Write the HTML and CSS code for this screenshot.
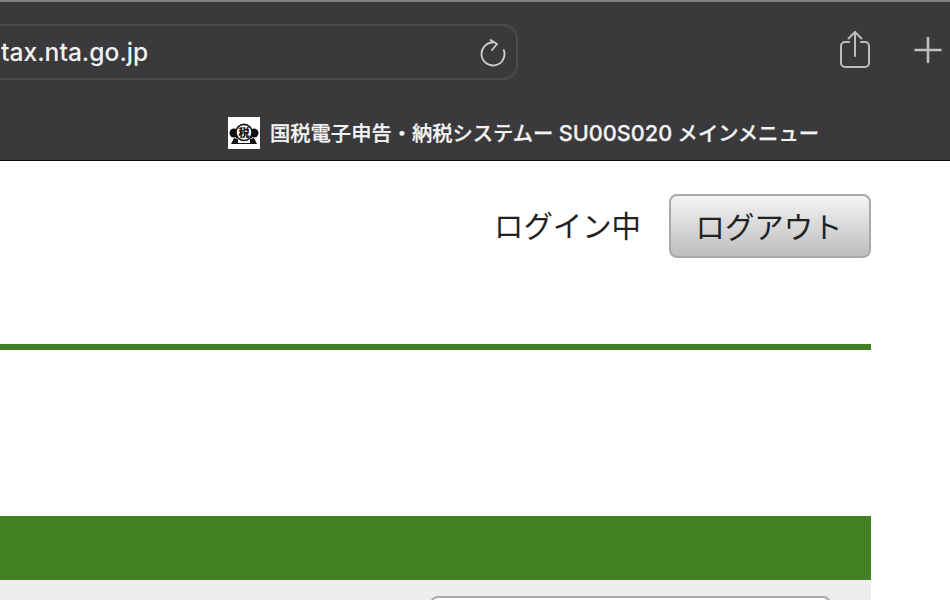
FILE: index.html
```html
<!DOCTYPE html>
<html lang="ja">
<head>
<meta charset="utf-8">
<title>国税電子申告・納税システム</title>
<link rel="stylesheet" href="styles.css">
</head>
<body>
<header class="toolbar">
  <div class="toolbar-top">
    <div class="url-bar">
      <span class="url-text">tax.nta.go.jp</span>
      <svg class="reload" width="26" height="30" viewBox="0 0 26 30" fill="none" stroke="#d0d0d1" stroke-width="1.8" stroke-linecap="round" stroke-linejoin="round">
        <path d="M12.500 3.500A11.500 11.500 0 1 0 23.800 11"/>
        <path d="M10.700 1 17 5 12 11"/>
      </svg>
    </div>
    <div class="toolbar-actions">
      <svg class="share" width="32" height="40" viewBox="0 0 32 40" fill="none" stroke="#bcbcbd" stroke-width="2" stroke-linecap="round" stroke-linejoin="round">
        <path d="M10 12H6a4 4 0 0 0-4 4v17a4 4 0 0 0 4 4h20a4 4 0 0 0 4-4V16a4 4 0 0 0-4-4h-4"/>
        <path d="M16 26V2"/>
        <path d="M9.500 8.500 16 2l6.500 6.500"/>
      </svg>
      <svg class="plus" width="28" height="28" viewBox="0 0 28 28" fill="none" stroke="#c0c0c1" stroke-width="2.600" stroke-linecap="round">
        <path d="M14 2v24M1.500 14h25"/>
      </svg>
    </div>
  </div>
  <div class="tab-title">
    <svg class="logo" width="32" height="32" viewBox="0 0 32 32">
      <rect width="32" height="32" fill="#fff"/>
      <path d="M9 10Q16 3 23 10L24 21H8Z" fill="#111"/>
      <circle cx="6" cy="16" r="4.500" fill="#111"/>
      <circle cx="26" cy="16" r="4.500" fill="#111"/>
      <path d="M3 27 6 21 10 22 10 26H22L22 22 26 21 29 27Z" fill="#111"/>
      <circle cx="16" cy="15.500" r="8" fill="#fff" stroke="#111" stroke-width="1.500"/>
      <text x="16" y="19.500" class="logo-char" text-anchor="middle">税</text>
    </svg>
    <span class="tab-text">国税電子申告・納税システムー <span class="tab-code">SU00S020</span> メインメニュー</span>
  </div>
</header>
<main class="page">
  <div class="user-row">
    <span class="user-status">ログイン中</span>
    <button class="logout" type="button">ログアウト</button>
  </div>
  <div class="rule"></div>
  <div class="menu-band"></div>
  <div class="menu-panel">
    <div class="menu-button"></div>
  </div>
</main>
</body>
</html>
```
FILE: styles.css
```css
* { box-sizing: border-box; }
html, body { margin: 0; padding: 0; height: 600px; overflow: hidden; background: #fff; }
body { font-family: "Noto Sans CJK JP", "Noto Sans", sans-serif; }

.toolbar {
  height: 161px;
  background: #3a3a3c;
  border-top: 2px solid #7f7f80;
  border-bottom: 1px solid #0c0c0c;
  display: flex;
  flex-direction: column;
}
.toolbar-top {
  display: flex;
  align-items: flex-start;
  padding-top: 22px;
  height: 115px;
}
.url-bar {
  width: 538px;
  height: 56px;
  margin-left: -20px;
  padding: 0 10px 0 19px;
  border: 2px solid #4d4d4f;
  border-radius: 15px;
  display: flex;
  align-items: center;
  justify-content: space-between;
}
.url-text {
  font-family: Inter, "Noto Sans", sans-serif;
  font-size: 24.6px;
  font-weight: 500;
  color: #f1f1f1;
}
.reload { margin-top: 4px; }
.toolbar-actions {
  display: flex;
  align-items: center;
  margin-left: 321px;
  padding-top: 6px;
}
.plus { margin-left: 43px; }
.tab-title {
  display: flex;
  align-items: center;
  padding-left: 228px;
  gap: 10px;
}
.logo { flex: none; }
.logo-char { font-size: 11px; font-weight: 900; fill: #111; }
.tab-text {
  font-family: Inter, "Noto Sans CJK JP", sans-serif;
  font-size: 20.3px;
  font-weight: 500;
  color: #f4f4f4;
  -webkit-text-stroke: 0.25px #f4f4f4;
  white-space: nowrap;
  margin-top: -3px;
}
.tab-code { font-size: 21.7px; font-weight: 500; }

.page { width: 871px; }
.user-row {
  display: flex;
  justify-content: flex-end;
  align-items: center;
  gap: 28px;
  padding-top: 33px;
}
.user-status { font-size: 29.4px; color: #222; line-height: 64px; margin-top: -5px; }
.logout {
  width: 202px;
  height: 64px;
  padding: 0 2px 3px 0;
  font-family: inherit;
  font-size: 29.4px;
  color: #222;
  border: 2px solid #a9a9a9;
  border-radius: 8px;
  background: linear-gradient(#f4f4f4, #bdbdbd);
}
.rule { height: 6px; margin-top: 86px; background: #437f23; }
.menu-band { height: 64px; margin-top: 166px; background: #437f23; }
.menu-panel {
  height: 20px;
  overflow: hidden;
  background: #eeeeee;
  padding: 16px 40px 0 430px;
}
.menu-button {
  height: 64px;
  border: 2px solid #a9a9a9;
  border-radius: 8px;
  background: #fff;
}
```
